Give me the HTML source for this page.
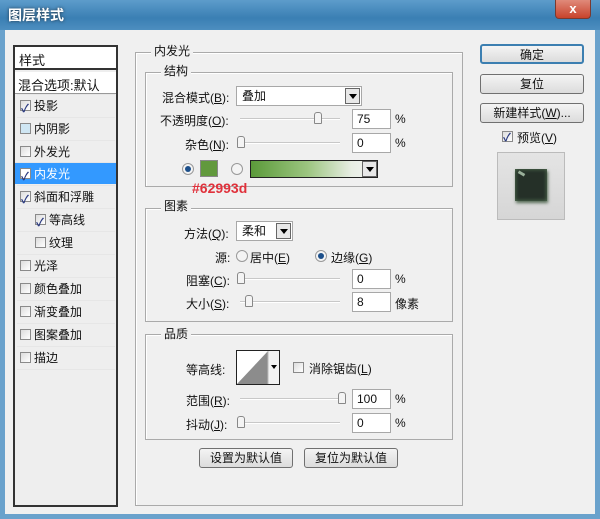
<!DOCTYPE html>
<html><head><meta charset="utf-8"><style>
*{box-sizing:border-box;margin:0;padding:0}
body{width:600px;height:519px;overflow:hidden;background:#f0f0f0;font-family:"Liberation Sans","Noto Sans CJK SC",sans-serif;font-size:12px;color:#111;position:relative}
.a{position:absolute;white-space:nowrap}
.title{left:0;top:0;width:600px;height:30px;background:linear-gradient(#5d9ccb,#3a7fb3 60%,#4d8ebf)}
.frame{top:30px;width:5px;height:489px;background:#6aa2cc}
.close{left:555px;top:0;width:36px;height:19px;background:linear-gradient(#e08a7a,#c8432c);border:1px solid #7a3a30;border-top:none;border-radius:0 0 4px 4px;color:#fff;text-align:center;font-weight:bold;font-size:13px;line-height:18px}
.box{border:1px solid #aaa;box-shadow:1px 1px 0 #fff inset}
.lbl{background:#f0f0f0;padding:0 3px;line-height:13px}
.inp{background:#fff;border:1px solid #a8a8a8;height:20px;line-height:18px;padding-left:4px}
.sel{background:#fff;border:1px solid #a8a8a8;height:20px;line-height:18px;padding-left:5px}
.arr{position:absolute;right:1px;top:1px;width:15px;height:16px;border:1px solid #666;background:#e8e8e8}
.arr:after{content:"";position:absolute;left:3px;top:5px;border:4px solid transparent;border-top:5px solid #000}
.track{height:2px;background:#c8c8c8;border-bottom:1px solid #fff}
.thumb{width:8px;height:12px;background:#f4f4f4;border:1px solid #888;border-radius:3px 3px 1px 1px}
.cb{width:11px;height:11px;border:1px solid #8a8a8a;background:linear-gradient(135deg,#ddd,#fff)}
.ck:after{content:"✓";position:absolute;left:0;top:-3px;font-size:11px;color:#2a3a80;font-weight:bold}
.rad{width:12px;height:12px;border:1px solid #999;border-radius:50%;background:#f4f4f4}
.rad.on:after{content:"";position:absolute;left:2px;top:2px;width:6px;height:6px;border-radius:50%;background:#1c4f8a}
.btn{border:1px solid #707070;border-radius:3px;background:linear-gradient(#f4f4f4,#dcdcdc);text-align:center;line-height:18px;height:20px}
.li{left:17px;width:98px;height:22px;line-height:22px;border-top:1px solid #e6e6e6}
</style></head><body>
<div class="a title"></div>
<div class="a" style="left:8px;top:5px;color:#fff;font-weight:bold;font-size:14px;text-shadow:0 0 3px #234">图层样式</div>
<div class="a close">x</div>
<div class="a frame" style="left:0"></div><div class="a frame" style="left:595px"></div>
<div class="a" style="left:0;top:514px;width:600px;height:5px;background:#6aa2cc"></div>

<!-- left list -->
<div class="a" style="left:13px;top:45px;width:105px;height:462px;background:#eee;border:2px solid #333;border-right-color:#333"></div>
<div class="a" style="left:15px;top:47px;width:101px;height:23px;background:#fff;border-bottom:2px solid #333"></div>
<div class="a" style="left:19px;top:50px;font-size:13px">样式</div>
<div class="a" style="left:15px;top:72px;width:101px;height:22px;background:#fff;border-bottom:1px solid #999"></div>
<div class="a" style="left:18px;top:75px;font-size:13px">混合选项:默认</div>
<div class="a li" style="top:94px"><span class="a cb ck" style="left:3px;top:5px"></span><span class="a" style="left:17px">投影</span></div>
<div class="a li" style="top:117px"><span class="a cb" style="left:3px;top:5px;background:#cfe6f3"></span><span class="a" style="left:17px">内阴影</span></div>
<div class="a li" style="top:140px"><span class="a cb" style="left:3px;top:5px"></span><span class="a" style="left:17px">外发光</span></div>
<div class="a li" style="top:162px;background:#3399ff;color:#fff;left:15px;width:101px"><span class="a cb ck" style="left:5px;top:5px;background:#fff"></span><span class="a" style="left:19px">内发光</span></div>
<div class="a li" style="top:185px"><span class="a cb ck" style="left:3px;top:5px"></span><span class="a" style="left:17px">斜面和浮雕</span></div>
<div class="a li" style="top:208px"><span class="a cb ck" style="left:18px;top:5px"></span><span class="a" style="left:32px">等高线</span></div>
<div class="a li" style="top:231px"><span class="a cb" style="left:18px;top:5px"></span><span class="a" style="left:32px">纹理</span></div>
<div class="a li" style="top:254px"><span class="a cb" style="left:3px;top:5px"></span><span class="a" style="left:17px">光泽</span></div>
<div class="a li" style="top:277px"><span class="a cb" style="left:3px;top:5px"></span><span class="a" style="left:17px">颜色叠加</span></div>
<div class="a li" style="top:300px"><span class="a cb" style="left:3px;top:5px"></span><span class="a" style="left:17px">渐变叠加</span></div>
<div class="a li" style="top:323px"><span class="a cb" style="left:3px;top:5px"></span><span class="a" style="left:17px">图案叠加</span></div>
<div class="a li" style="top:346px"><span class="a cb" style="left:3px;top:5px"></span><span class="a" style="left:17px">描边</span></div>
<div class="a" style="left:17px;top:369px;width:98px;border-top:1px solid #e6e6e6"></div>

<!-- main panel -->
<div class="a box" style="left:135px;top:52px;width:328px;height:454px"></div>
<div class="a lbl" style="left:151px;top:45px">内发光</div>
<div class="a box" style="left:145px;top:72px;width:308px;height:115px"></div>
<div class="a lbl" style="left:161px;top:65px">结构</div>
<div class="a" style="left:162px;top:89px">混合模式(<u>B</u>):</div>
<div class="a sel" style="left:236px;top:86px;width:126px">叠加<span class="arr"></span></div>
<div class="a" style="left:160px;top:112px">不透明度(<u>O</u>):</div>
<div class="a track" style="left:240px;top:118px;width:100px"></div>
<div class="a thumb" style="left:314px;top:112px"></div>
<div class="a inp" style="left:352px;top:109px;width:39px">75</div><div class="a" style="left:395px;top:112px">%</div>
<div class="a" style="left:185px;top:136px">杂色(<u>N</u>):</div>
<div class="a track" style="left:240px;top:142px;width:100px"></div>
<div class="a thumb" style="left:237px;top:136px"></div>
<div class="a inp" style="left:352px;top:133px;width:39px">0</div><div class="a" style="left:395px;top:136px">%</div>
<div class="a rad on" style="left:182px;top:163px"></div>
<div class="a" style="left:200px;top:160px;width:18px;height:17px;background:#62993d;border:1px solid #888"></div>
<div class="a rad" style="left:231px;top:163px"></div>
<div class="a" style="left:250px;top:160px;width:128px;height:18px;border:1px solid #222;background:linear-gradient(90deg,#5b9a3a,#9cc580 45%,#e8eee4 80%,#f4f4f4);"><span class="arr" style="top:0;right:0;height:16px"></span></div>
<div class="a" style="left:192px;top:180px;color:#e0313b;font-weight:bold;font-size:14px">#62993d</div>

<div class="a box" style="left:145px;top:208px;width:308px;height:114px"></div>
<div class="a lbl" style="left:161px;top:200px">图素</div>
<div class="a" style="left:184px;top:225px">方法(<u>Q</u>):</div>
<div class="a sel" style="left:236px;top:221px;width:57px">柔和<span class="arr"></span></div>
<div class="a" style="left:215px;top:249px">源:</div>
<div class="a rad" style="left:236px;top:250px"></div><div class="a" style="left:250px;top:249px">居中(<u>E</u>)</div>
<div class="a rad on" style="left:315px;top:250px"></div><div class="a" style="left:331px;top:249px">边缘(<u>G</u>)</div>
<div class="a" style="left:186px;top:272px">阻塞(<u>C</u>):</div>
<div class="a track" style="left:240px;top:278px;width:100px"></div>
<div class="a thumb" style="left:237px;top:272px"></div>
<div class="a inp" style="left:352px;top:269px;width:39px">0</div><div class="a" style="left:395px;top:272px">%</div>
<div class="a" style="left:186px;top:295px">大小(<u>S</u>):</div>
<div class="a track" style="left:240px;top:301px;width:100px"></div>
<div class="a thumb" style="left:245px;top:295px"></div>
<div class="a inp" style="left:352px;top:292px;width:39px">8</div><div class="a" style="left:395px;top:295px">像素</div>

<div class="a box" style="left:145px;top:334px;width:308px;height:106px"></div>
<div class="a lbl" style="left:161px;top:328px">品质</div>
<div class="a" style="left:186px;top:361px">等高线:</div>
<div class="a" style="left:236px;top:350px;width:44px;height:35px;border:1px solid #222;background:#fff;overflow:hidden">
<svg width="42" height="33" style="position:absolute;left:0;top:0"><polygon points="0,33 31,0 31,33" fill="#8c8c8c"/><rect x="31" y="0" width="11" height="33" fill="#f2f2f2"/><line x1="31" y1="0" x2="31" y2="33" stroke="#bbb"/><polygon points="34,14 40,14 37,18" fill="#000"/></svg></div>
<div class="a cb" style="left:293px;top:362px"></div><div class="a" style="left:309px;top:360px">消除锯齿(<u>L</u>)</div>
<div class="a" style="left:186px;top:392px">范围(<u>R</u>):</div>
<div class="a track" style="left:240px;top:398px;width:104px"></div>
<div class="a thumb" style="left:338px;top:392px"></div>
<div class="a inp" style="left:352px;top:389px;width:39px">100</div><div class="a" style="left:395px;top:392px">%</div>
<div class="a" style="left:186px;top:416px">抖动(<u>J</u>):</div>
<div class="a track" style="left:240px;top:422px;width:100px"></div>
<div class="a thumb" style="left:237px;top:416px"></div>
<div class="a inp" style="left:352px;top:413px;width:39px">0</div><div class="a" style="left:395px;top:416px">%</div>
<div class="a btn" style="left:199px;top:448px;width:94px">设置为默认值</div>
<div class="a btn" style="left:304px;top:448px;width:94px">复位为默认值</div>

<!-- right -->
<div class="a btn" style="left:480px;top:44px;width:104px;border:2px solid #3c7fb1">确定</div>
<div class="a btn" style="left:480px;top:74px;width:104px">复位</div>
<div class="a btn" style="left:480px;top:103px;width:104px">新建样式(<u>W</u>)...</div>
<div class="a cb ck" style="left:502px;top:131px"></div><div class="a" style="left:517px;top:129px">预览(<u>V</u>)</div>
<div class="a" style="left:497px;top:152px;width:68px;height:68px;background:linear-gradient(#e4e4e4,#d6d6d6);border:1px solid #bbb"></div>
<div class="a" style="left:515px;top:169px;width:32px;height:32px;background:#253028;box-shadow:1px 2px 3px #556b55,inset 0 0 4px #5a7a5a"></div>
<div class="a" style="left:518px;top:172px;width:7px;height:3px;background:#9ab09a;transform:rotate(30deg)"></div>
</body></html>
